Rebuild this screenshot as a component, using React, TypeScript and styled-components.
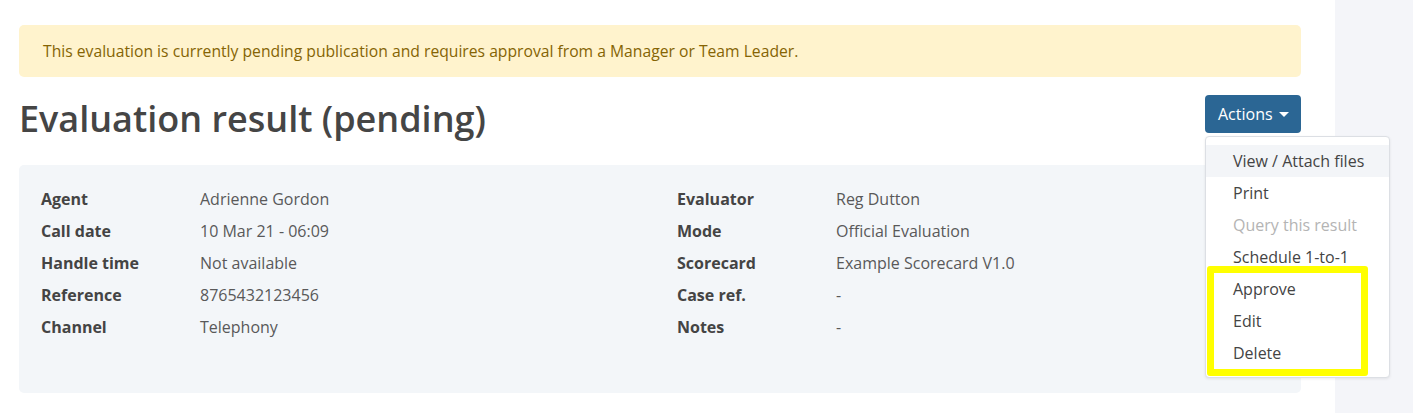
import React from "react";
import styled, { createGlobalStyle } from "styled-components";

const Global = createGlobalStyle`
  html, body { margin: 0; padding: 0; background: #ffffff; }
  body { font-family: "Open Sans", "Noto Sans", sans-serif; color: #444; }
  * { box-sizing: border-box; }
`;

const Page = styled.div`
  display: flex;
  width: 1413px;
  height: 413px;
  overflow: hidden;
`;

const Main = styled.main`
  flex: 1;
  padding: 25px 34px 0 19px;
`;

const Sidebar = styled.aside`
  width: 78px;
  background: #f4f5f9;
`;

const Alert = styled.div`
  background: #fff3cd;
  color: #856404;
  border-radius: 5px;
  height: 52px;
  padding: 0 24px;
  display: flex;
  align-items: center;
  font-size: 15.7px;
`;

const Header = styled.div`
  display: flex;
  justify-content: space-between;
  align-items: flex-start;
  margin-top: 18px;
  height: 70px;
`;

const Title = styled.h1`
  margin: 0;
  font-size: 36px;
  font-weight: 600;
  color: #454545;
  line-height: 48px;
`;

const ActionWrap = styled.div`
  position: relative;
`;

const ActionButton = styled.button`
  display: flex;
  align-items: center;
  gap: 6px;
  height: 38px;
  width: 96px;
  padding: 0 0 0 13px;
  border: none;
  border-radius: 4px;
  background: #2b6694;
  color: #ffffff;
  font-family: inherit;
  font-size: 16px;
`;

const Caret = styled.span`
  width: 0;
  height: 0;
  border-left: 5px solid transparent;
  border-right: 5px solid transparent;
  border-top: 5px solid #ffffff;
`;

const Menu = styled.div`
  position: absolute;
  top: calc(100% + 3px);
  left: 0;
  width: 185px;
  background: #ffffff;
  border: 1px solid #dcdfe4;
  border-radius: 4px;
  box-shadow: 0 1px 3px rgba(0, 0, 0, 0.08);
  padding: 8px 0;
  z-index: 5;
`;

const MenuItem = styled.div<{ $active?: boolean; $disabled?: boolean }>`
  height: 32px;
  line-height: 32px;
  padding-left: 27px;
  font-size: 16px;
  white-space: nowrap;
  color: ${(p) => (p.$disabled ? "#b4b4b4" : "#444")};
  background: ${(p) => (p.$active ? "#f3f5f8" : "transparent")};
`;

const Highlight = styled.div`
  position: absolute;
  left: 1px;
  top: 129px;
  width: 161px;
  height: 110px;
  border: 7px solid #ffff00;
  border-radius: 3px;
  pointer-events: none;
`;

const Card = styled.section`
  background: #f3f6f9;
  border-radius: 5px;
  padding: 18px 22px 50px;
  display: grid;
  grid-template-columns: 1fr 1fr;
  column-gap: 34px;
`;

const Column = styled.dl`
  margin: 0;
  display: grid;
  grid-template-columns: 159px 1fr;
  grid-auto-rows: 32px;
  align-items: center;
  font-size: 16px;
`;

const Label = styled.dt`
  font-weight: 700;
  color: #444;
`;

const Value = styled.dd`
  margin: 0;
  color: #595959;
`;

const left: [string, string][] = [
  ["Agent", "Adrienne Gordon"],
  ["Call date", "10 Mar 21 - 06:09"],
  ["Handle time", "Not available"],
  ["Reference", "8765432123456"],
  ["Channel", "Telephony"],
];

const right: [string, string][] = [
  ["Evaluator", "Reg Dutton"],
  ["Mode", "Official Evaluation"],
  ["Scorecard", "Example Scorecard V1.0"],
  ["Case ref.", "-"],
  ["Notes", "-"],
];

const menu = [
  { label: "View / Attach files", active: true },
  { label: "Print" },
  { label: "Query this result", disabled: true },
  { label: "Schedule 1-to-1" },
  { label: "Approve" },
  { label: "Edit" },
  { label: "Delete" },
];

export default function App() {
  return (
    <>
      <Global />
      <Page>
        <Main>
          <Alert>
            This evaluation is currently pending publication and requires approval from a Manager or Team Leader.
          </Alert>
          <Header>
            <Title>Evaluation result (pending)</Title>
            <ActionWrap>
              <ActionButton>
                Actions <Caret />
              </ActionButton>
              <Menu>
                {menu.map((m) => (
                  <MenuItem key={m.label} $active={m.active} $disabled={m.disabled}>
                    {m.label}
                  </MenuItem>
                ))}
                <Highlight />
              </Menu>
            </ActionWrap>
          </Header>
          <Card>
            <Column>
              {left.map(([k, v]) => (
                <React.Fragment key={k}>
                  <Label>{k}</Label>
                  <Value>{v}</Value>
                </React.Fragment>
              ))}
            </Column>
            <Column>
              {right.map(([k, v]) => (
                <React.Fragment key={k}>
                  <Label>{k}</Label>
                  <Value>{v}</Value>
                </React.Fragment>
              ))}
            </Column>
          </Card>
        </Main>
        <Sidebar />
      </Page>
    </>
  );
}
